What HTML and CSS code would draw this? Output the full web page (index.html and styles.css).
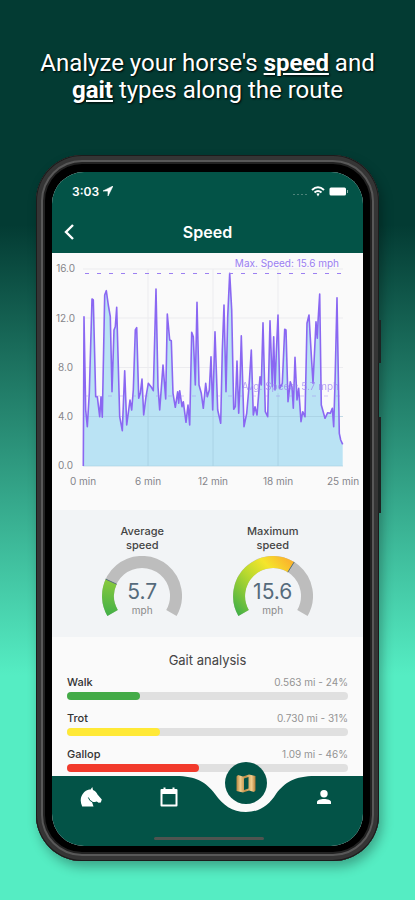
FILE: index.html
```html
<!DOCTYPE html>
<html lang="en">
<head>
    <meta charset="utf-8">
    <meta name="viewport" content="width=device-width, initial-scale=1">
    <title>Speed</title>
    <link rel="stylesheet" href="styles.css">
</head>
<body>
    <h1 class="headline">Analyze your horse's <b>speed</b> and <b>gait</b> types along the route</h1>

    <div class="phone">
        <span class="side-button power"></span>
        <span class="side-button volume"></span>

        <div class="screen">
            <header class="top">
                <div class="status-bar">
                    <span class="time">3:03</span>
                    <svg class="location" width="10" height="10" viewBox="0 0 10 10"><path d="M10 0 L0 5 L5 5 L5 10 Z" fill="#fff" stroke="#fff" stroke-width="0.600"/></svg>
                    <span class="status-icons">
                        <svg width="14" height="10" viewBox="0 0 14 10"><path d="M0 8.500h2M4 8.500h2M8 8.500h2M12 8.500h2" stroke="#4c8279"/></svg>
                        <svg width="14" height="11" viewBox="0 0 14 11" fill="none" stroke="#fff" stroke-width="2"><path d="M1 4 Q7 -1.500 13 4"/><path d="M3.500 6.500 Q7 3.500 10.500 6.500"/><path d="M5.400 7.800 Q7 6.800 8.600 7.800 L7 10.500 Z" fill="#fff" stroke="none"/></svg>
                        <svg width="20" height="9" viewBox="0 0 20 9"><rect x="0.500" y="0.500" width="16.500" height="8" rx="1.500" fill="#fff"/><path d="M18.500 3v3" stroke="#8fb3ad"/></svg>
                    </span>
                </div>
                <div class="app-bar">
                    <button class="back" aria-label="Back">
                        <svg width="10" height="16" viewBox="0 0 10 16"><path d="M9 1 L2 8 L9 15" fill="none" stroke="#fff" stroke-width="2.400"/></svg>
                    </button>
                    <h2>Speed</h2>
                </div>
            </header>

            <section class="chart">
                <svg viewBox="0 0 311 257">
                    <g stroke="#ececef">
                        <path d="M31 16H291M31 65H291M31 114.500H291M31 163.500H291"/>
                        <path d="M96 16V213M161 16V213M226 16V213"/>
                    </g>
                    <path id="area" fill="#8fd3f0" fill-opacity="0.600"/>
                    <path d="M96 140V213M161 140V213M226 140V213M31 163.500H291M31 213H291" stroke="#a6cfe0" stroke-opacity="0.600"/>
                    <path id="line" fill="none" stroke="#8a67f2" stroke-width="1.600" stroke-linejoin="round"/>
                    <path d="M31 20.500H289" stroke="#9c80f2" stroke-width="1.200" stroke-dasharray="4 8" stroke-dashoffset="-2"/>
                    <path d="M31 143H289" stroke="#9c80f2" stroke-opacity="0.400" stroke-dasharray="4 8" stroke-dashoffset="-1"/>
                    <g class="line-label" text-anchor="end">
                        <text x="287" y="14">Max. Speed: 15.6 mph</text>
                        <text class="faded" x="287" y="137">Avg. Speed: 5.7 mph</text>
                    </g>
                    <g class="axis" text-anchor="end">
                        <text x="23" y="19">16.0</text>
                        <text x="23" y="69">12.0</text>
                        <text x="21" y="118">8.0</text>
                        <text x="21" y="167">4.0</text>
                        <text x="21" y="216">0.0</text>
                    </g>
                    <g class="axis" text-anchor="middle">
                        <text x="31" y="232">0 min</text>
                        <text x="96" y="232">6 min</text>
                        <text x="161" y="232">12 min</text>
                        <text x="226" y="232">18 min</text>
                        <text x="291" y="232">25 min</text>
                    </g>
                </svg>
            </section>

            <section class="gauges">
                <div class="gauge">
                    <h3>Average<br>speed</h3>
                    <svg width="80" height="64" viewBox="0 0 80 64" fill="none" stroke-width="12">
                        <defs>
                            <linearGradient id="avg" gradientUnits="userSpaceOnUse" x1="10" y1="60" x2="16" y2="22">
                                <stop offset="0" stop-color="#43b047"/>
                                <stop offset="1" stop-color="#8fcc3c"/>
                            </linearGradient>
                        </defs>
                        <path d="M10.600 57 A34 34 0 1 1 69.400 57" stroke="#bdbdbd"/>
                        <path d="M10.600 57 A34 34 0 0 1 9.200 25.600" stroke="url(#avg)"/>
                        <path d="M3.700 23.100 L14.600 28.200" stroke="#546e7a" stroke-width="1"/>
                    </svg>
                    <p class="value">5.7</p>
                    <p class="unit">mph</p>
                </div>
                <div class="gauge">
                    <h3>Maximum<br>speed</h3>
                    <svg width="80" height="64" viewBox="0 0 80 64" fill="none" stroke-width="12">
                        <defs>
                            <linearGradient id="max" gradientUnits="userSpaceOnUse" x1="6" y1="60" x2="60" y2="10">
                                <stop offset="0" stop-color="#43b047"/>
                                <stop offset="0.450" stop-color="#b5d82f"/>
                                <stop offset="0.750" stop-color="#f5e52b"/>
                                <stop offset="1" stop-color="#fbb62d"/>
                            </linearGradient>
                        </defs>
                        <path d="M10.600 57 A34 34 0 1 1 69.400 57" stroke="#bdbdbd"/>
                        <path d="M10.600 57 A34 34 0 0 1 58 11.200" stroke="url(#max)"/>
                        <path d="M54.800 16.200 L61.200 6" stroke="#546e7a" stroke-width="1"/>
                    </svg>
                    <p class="value">15.6</p>
                    <p class="unit">mph</p>
                </div>
            </section>

            <section class="gaits">
                <h3>Gait analysis</h3>
                <div class="gait">
                    <span>Walk</span><span class="amount">0.563 mi - 24%</span>
                    <div class="track"><div class="fill walk" style="width: 26%"></div></div>
                </div>
                <div class="gait">
                    <span>Trot</span><span class="amount">0.730 mi - 31%</span>
                    <div class="track"><div class="fill trot" style="width: 33%"></div></div>
                </div>
                <div class="gait">
                    <span>Gallop</span><span class="amount">1.09 mi - 46%</span>
                    <div class="track"><div class="fill gallop" style="width: 47%"></div></div>
                </div>
            </section>

            <nav class="tabs">
                <svg class="tabs-shape" viewBox="0 0 311 70" preserveAspectRatio="none"><path d="M0 0 H124 C144 0 154 6 163 18 C171 29 180 36 194 36 C208 36 217 29 224 18 C233 6 243 0 263 0 H311 V70 H0 Z" fill="#035347"/></svg>
                <button class="tab" aria-label="Horses">
                    <svg width="22" height="20" viewBox="0 0 22 20"><path d="M12.300 0 L13 3 C15 3.600 16.600 5.300 17.500 7.500 L21.800 12.600 L20.800 15.400 L18.600 15.800 L16.800 14.400 C15 15 13.500 15.200 12 15 C12.500 16.500 13 18 13.500 19.600 H2.200 C-0.300 14 0.300 9 4.300 5 C6.400 3 9 2.600 10.600 2.600 Z" fill="#fff"/><path d="M8.400 10.500 Q9.200 14 12.600 15" fill="none" stroke="#035347"/></svg>
                </button>
                <button class="tab" aria-label="Calendar">
                    <svg width="18" height="20" viewBox="0 0 18 20"><path d="M1.500 3 H16.500 V18.500 H1.500 Z" fill="none" stroke="#fff" stroke-width="2" stroke-linejoin="round"/><path d="M1.500 3h15v4h-15z" fill="#fff"/><path d="M4.500 0.500v4M13.500 0.500v4" stroke="#fff" stroke-width="2"/></svg>
                </button>
                <button class="tab" aria-label="Map">
                    <span class="map-circle">
                        <svg width="20" height="19" viewBox="0 0 20 19">
                            <defs>
                                <linearGradient id="gold" x1="0" x2="1">
                                    <stop offset="0" stop-color="#b98540"/>
                                    <stop offset="0.200" stop-color="#f0cd8c"/>
                                    <stop offset="0.450" stop-color="#c08c45"/>
                                    <stop offset="0.800" stop-color="#f0cd8c"/>
                                    <stop offset="1" stop-color="#b07b35"/>
                                </linearGradient>
                            </defs>
                            <path d="M0.500 2.500 L2 1 L7 2.500 L13 0.500 L19.500 2 V16.500 L18 18 L13 16.500 L7 18.500 L0.500 17 Z M8 4.500 V16 L12.500 14.500 V3 Z" fill="url(#gold)" fill-rule="evenodd"/>
                        </svg>
                    </span>
                </button>
                <button class="tab" aria-label="Profile">
                    <svg width="14" height="14" viewBox="0 0 14 14"><circle cx="7" cy="3.700" r="3.700" fill="#fff"/><path d="M0 14 V12 C0 8 14 8 14 12 V14 Z" fill="#fff"/></svg>
                </button>
                <span class="home-indicator"></span>
            </nav>
        </div>
    </div>

    <script>
        // x,y pairs in chart units
        const points = [
            "31.3,213 32,63.7 33.7,157 35.3,173.7 37.3,140 40,46 41.3,47 43.7,143.7 45.3,143.7 47.7,163.7 49,143.7 50.3,164.3",
            "52.7,42 54.3,37.7 56.3,52 58.3,63.7 60,138.7 62,77 63.3,73.7 64.7,54.3 67.7,163.7 70.3,177.7 72.7,117.7 74.7,172",
            "78,147 79.7,157 81.3,137 83.3,77 84.7,74.7 86.7,145.3 88.3,140.3 90,126 91.7,162 94,143.7 96.3,130.3 99,133.7",
            "101.3,137.7 104,36 106,133.7 107.7,157 111,112 113.7,146 115.3,61 117.7,87 119.3,87.7 121,140.3 123.3,154.3",
            "125.7,138.7 126.7,150.3 127.7,137.7 130,153.7 131.3,148.7 134,169.3 136,152 137.7,172 139.7,79.3 141.3,83.7",
            "143.3,132 145,49.3 147,132 149.3,140.3 151.3,155.3 153.7,130.3 155.3,143.7 157.3,137 159,103.7 160.7,157",
            "163,78.7 165.7,157 168.7,170.3 170.3,97 172,52 174,138.7 175.7,63.7 177.7,20.3 179.7,57 181.7,156.3 183.3,153.7",
            "185,108 186.7,160.3 188,130.3 189.3,82.7 192,173.7 194.7,160.3 197,133.7 199.3,97 201.3,162 203,153.7 205,162",
            "208,123.7 209.3,132 211,69.7 213.3,158.7 215.7,163.7 218,67.7 220.3,133.7 221.7,83.7 223,137 224.3,100 226,62",
            "227.7,135.3 230.3,130.3 232.7,76.3 234,77 236,148.7 238.3,128.7 240,133.7 241.3,155.3 243,104.3 245,147",
            "246.7,135.3 249,168.7 250.7,158.7 253,163.7 255,70.3 257,62 259,97 261,130.3 264,68.7 265.3,85.3 266,68.7",
            "267.7,41 269.3,152 273,165.3 275.7,159.7 278.3,160.3 280.3,155.3 281.7,173.7 283,130.3 285,44.7 287.3,180.3",
            "288.7,187 290.7,191.3"
        ].join(" L");

        document.getElementById("line").setAttribute("d", "M" + points);
        document.getElementById("area").setAttribute("d", "M" + points + " V213 Z");
    </script>
</body>
</html>
```
FILE: styles.css
```css
* {
    box-sizing: border-box;
}

body {
    margin: 0;
    padding: 50px 36px 39px;
    min-height: 100vh;
    font-family: Inter, "Liberation Sans", sans-serif;
    background: linear-gradient(#033b33 0, #033b33 25%, #55edc3 75%, #55edc3 100%);
}

h1, h2, h3, p {
    margin: 0;
    font-weight: 500;
}

button {
    border: none;
    padding: 0;
    background: none;
    cursor: pointer;
}

svg {
    display: block;
}

.headline {
    margin-bottom: 51px;
    font-family: Roboto, sans-serif;
    font-size: 24px;
    line-height: 27px;
    font-weight: 400;
    text-align: center;
    color: #fff;
    text-shadow: 1px 1px 2px #000;
}

.headline b {
    text-decoration: underline;
}

.phone {
    position: relative;
    max-width: 420px;
    margin: 0 auto;
    padding: 17px 16px 15px;
    border-radius: 46px;
    background: #000;
    box-shadow: inset 0 0 0 1px #1c1c1c, inset 0 0 0 5px #353535, inset 0 0 0 7px #585858, inset 0 0 0 9px #222, 3px 6px 12px rgba(0, 0, 0, 0.3);
}

.side-button {
    position: absolute;
    right: -2px;
    width: 3px;
    background: #1d2322;
}

.power {
    top: 165px;
    height: 43px;
}

.volume {
    top: 262px;
    height: 96px;
}

.screen {
    border-radius: 32px;
    overflow: hidden;
    background: #fafafa;
}

.top {
    color: #fff;
    background: #035347;
}

.status-bar {
    display: flex;
    align-items: center;
    height: 38px;
    padding: 0 14px 0 20px;
}

.time {
    font-size: 12px;
    font-weight: 600;
}

.location {
    margin-left: 4px;
}

.status-icons {
    display: flex;
    align-items: center;
    gap: 4px;
    margin-left: auto;
}

.app-bar {
    display: grid;
    grid-template-columns: 34px 1fr 34px;
    align-items: center;
    height: 43px;
}

.back {
    padding-left: 12px;
}

.app-bar h2 {
    font-size: 16px;
    font-weight: 600;
    text-align: center;
}

.chart svg {
    width: 100%;
}

.axis {
    font-size: 10px;
    fill: #85858a;
}

.line-label {
    font-size: 10px;
    fill: #9a7ff2;
}

.faded {
    opacity: 0.7;
}

.gauges {
    display: grid;
    grid-template-columns: 1fr 1fr;
    padding: 14px 25px 19px;
    background: #f2f4f6;
}

.gauge {
    display: grid;
    grid-template-rows: 32px 24px 24px 14px;
    justify-items: center;
    text-align: center;
}

.gauge h3 {
    font-size: 11px;
    line-height: 14px;
    color: #444;
}

.gauge svg {
    grid-area: 2 / 1 / 5 / 2;
}

.value {
    grid-area: 3 / 1;
    font-size: 21px;
    line-height: 24px;
    font-weight: 400;
    color: #566b7c;
}

.unit {
    grid-area: 4 / 1;
    font-size: 10px;
    line-height: 12px;
    font-weight: 400;
    color: #8a8a8a;
}

.gaits {
    padding: 15px 15px 4px;
}

.gaits h3 {
    margin-bottom: 6px;
    font-size: 13px;
    line-height: 16px;
    font-weight: 400;
    text-align: center;
    color: #444;
}

.gait {
    display: flex;
    flex-wrap: wrap;
    justify-content: space-between;
    font-size: 11px;
    line-height: 16px;
    font-weight: 500;
    color: #333;
}

.gait + .gait {
    margin-top: 10px;
}

.amount {
    font-size: 10px;
    font-weight: 400;
    color: #939393;
}

.track {
    width: 100%;
    height: 8px;
    margin-top: 2px;
    border-radius: 4px;
    background: #e0e0e0;
}

.fill {
    height: 8px;
    border-radius: 4px;
}

.walk {
    background: #43ab47;
}

.trot {
    background: #ffe937;
}

.gallop {
    background: #f23a2c;
}

.tabs {
    position: relative;
    display: grid;
    grid-template-columns: repeat(4, 1fr);
    height: 70px;
}

.tabs-shape {
    position: absolute;
    width: 100%;
    height: 100%;
}

.tab {
    position: relative;
    display: flex;
    justify-content: center;
    align-items: center;
    height: 42px;
}

.map-circle {
    position: absolute;
    top: -14px;
    display: flex;
    justify-content: center;
    align-items: center;
    width: 42px;
    height: 42px;
    border-radius: 50%;
    background: #035347;
}

.home-indicator {
    position: absolute;
    bottom: 6px;
    left: 50%;
    width: 110px;
    height: 3px;
    margin-left: -54px;
    border-radius: 2px;
    background: #4f5450;
}
```
